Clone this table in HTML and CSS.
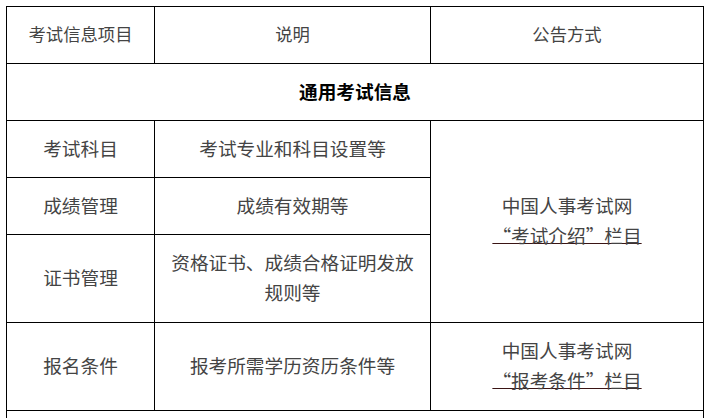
FILE: index.html
```html
<!DOCTYPE html>
<html lang="zh-CN">
<head>
<meta charset="utf-8">
<title>考试信息</title>
<link rel="stylesheet" href="styles.css">
</head>
<body>
<div class="page">
  <table class="info">
    <colgroup><col class="c1"><col class="c2"><col class="c3"></colgroup>
    <thead>
      <tr class="r57 hdr"><th>考试信息项目</th><th>说明</th><th>公告方式</th></tr>
    </thead>
    <tbody>
      <tr class="r57"><td colspan="3" class="section">通用考试信息</td></tr>
      <tr class="r57">
        <td>考试科目</td>
        <td>考试专业和科目设置等</td>
        <td rowspan="3" class="notice"><span class="line">中国人事考试网</span><span class="line"><span class="link">“考试介绍”栏目</span></span></td>
      </tr>
      <tr class="r57"><td>成绩管理</td><td>成绩有效期等</td></tr>
      <tr class="r88"><td>证书管理</td><td>资格证书、成绩合格证明发放规则等</td></tr>
      <tr class="r88">
        <td>报名条件</td>
        <td>报考所需学历资历条件等</td>
        <td class="notice"><span class="line">中国人事考试网</span><span class="line"><span class="link">“报考条件”栏目</span></span></td>
      </tr>
      <tr class="r57"><td colspan="3" class="section"></td></tr>
    </tbody>
  </table>
</div>
</body>
</html>
```

FILE: styles.css
```css
html, body {
  margin: 0;
  background: #fff;
}
.page {
  padding: 6px;
}
.info {
  border-collapse: collapse;
  table-layout: fixed;
  width: 697px;
  font-family: "Noto Sans CJK SC", "Noto Sans", sans-serif;
  color: #444;
}
.c1 { width: 148px; }
.c2 { width: 276px; }
.c3 { width: 273px; }
.info th,
.info td {
  border: 1px solid #000;
  text-align: center;
  vertical-align: middle;
  padding: 0 10px 3px;
  font-size: 18.67px;
  font-weight: 400;
  line-height: 30px;
  font-feature-settings: "fwid" 1;
}
.hdr th {
  font-size: 17.33px;
}
.r57 { height: 57px; }
.r88 { height: 88px; }
.info td.section {
  font-weight: 700;
  color: #000;
}
.notice .line {
  display: block;
}
.notice .link {
  text-decoration: underline;
  text-decoration-color: #3a1414;
  text-underline-offset: 0px;
}
```
